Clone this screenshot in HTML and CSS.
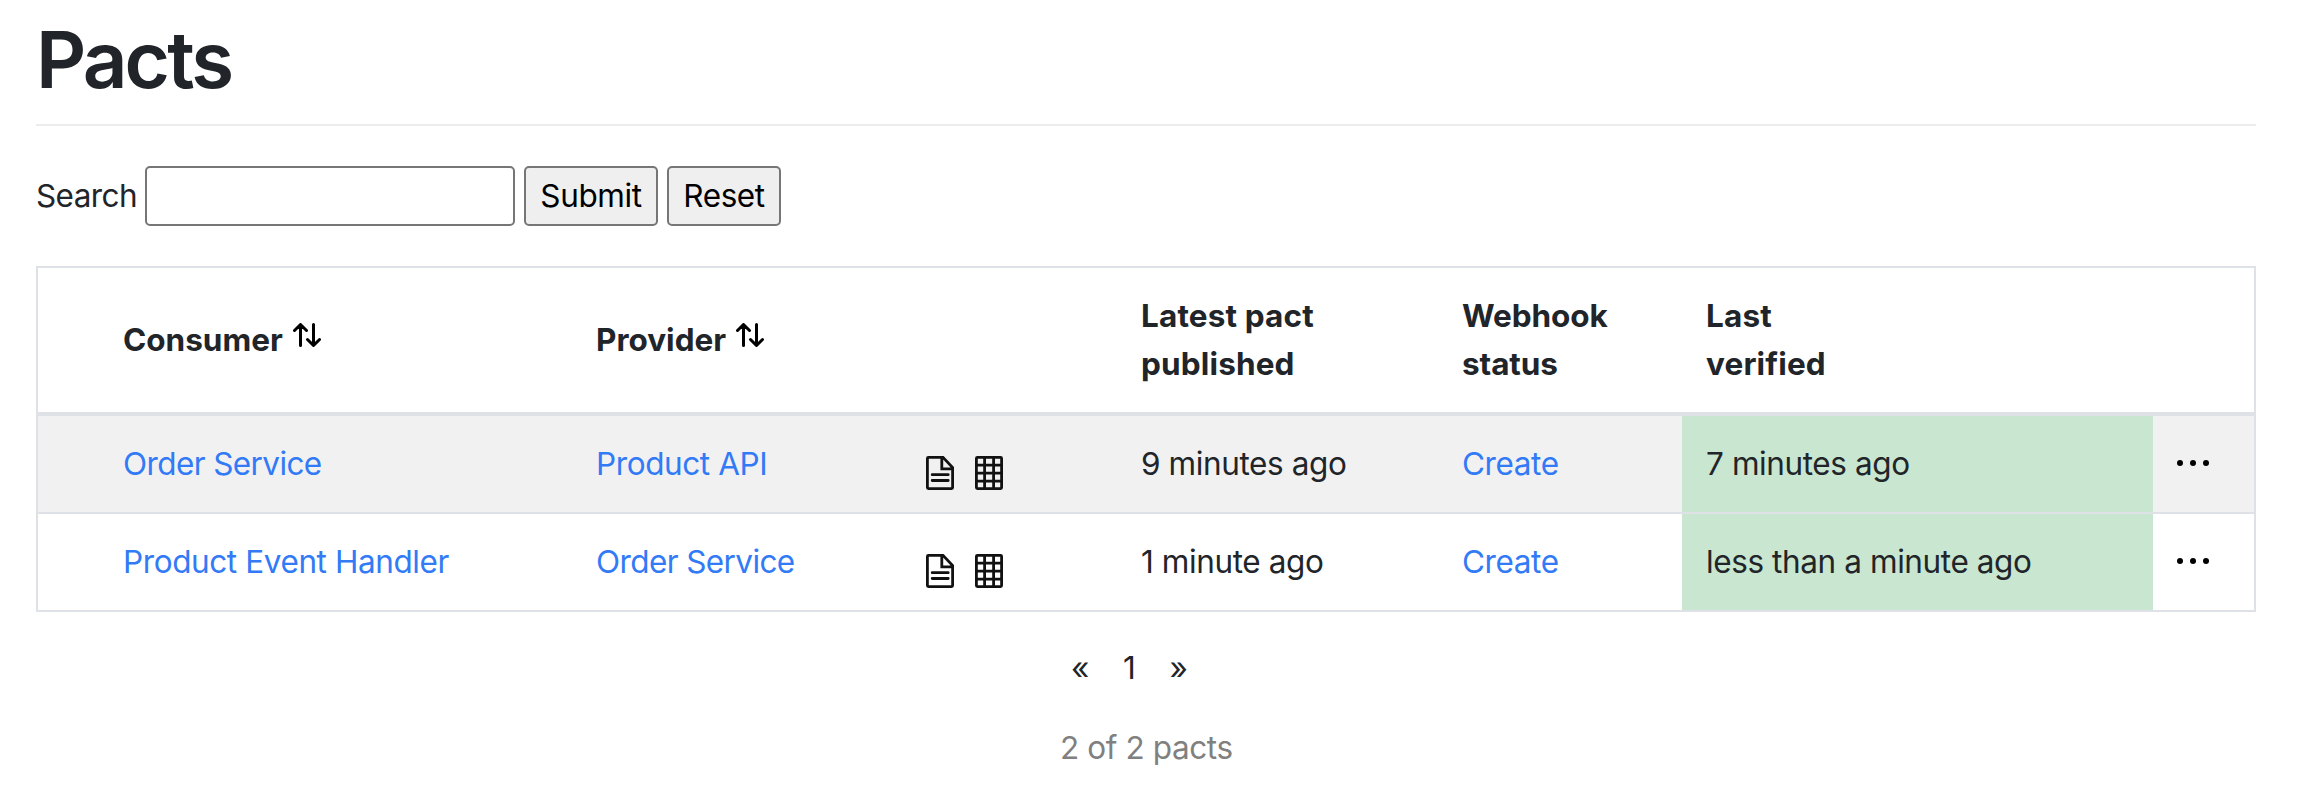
FILE: index.html
```html
<!DOCTYPE html>
<html lang="en">
<head>
<meta charset="utf-8">
<title>Pacts</title>
<link rel="stylesheet" href="styles.css">
</head>
<body>
<svg class="defs" width="0" height="0">
  <symbol id="sort" viewBox="0 0 28 24"><path d="M7.5 22.5V2M1.5 7.5l6-6 6 6M20.5 1.5V22M14.5 16.5l6 6 6-6"/></symbol>
  <symbol id="doc" viewBox="0 0 28 34"><path d="M1.4 2.4Q1.4 1.4 2.4 1.4H17L26.6 11.5V31.6Q26.6 32.6 25.6 32.6H2.4Q1.4 32.6 1.4 31.6ZM15.8 1.4V12.8H26.6M6.2 18.7H22.2M6.2 24.5H22.2"/></symbol>
  <symbol id="grid" viewBox="0 0 28 34"><path d="M2.4 1.4H25.6Q26.6 1.4 26.6 2.4V31.6Q26.6 32.6 25.6 32.6H2.4Q1.4 32.6 1.4 31.6V2.4Q1.4 1.4 2.4 1.4ZM9.6 1.4V32.6M18.6 1.4V32.6M1.4 9.2H26.6M1.4 17.2H26.6M1.4 25.2H26.6"/></symbol>
  <symbol id="dots" viewBox="0 0 34 6"><circle cx="4" cy="3" r="3"/><circle cx="17" cy="3" r="3"/><circle cx="30" cy="3" r="3"/></symbol>
</svg>
<main class="page">
  <h1 class="title">Pacts</h1>
  <form class="search">
    <label class="search-label" for="q">Search</label>
    <input class="search-input" id="q" type="text">
    <button class="btn btn-submit" type="button">Submit</button>
    <button class="btn btn-reset" type="button">Reset</button>
  </form>
  <table class="pacts">
    <colgroup><col class="c-pad"><col class="c-consumer"><col class="c-provider"><col class="c-icons"><col class="c-published"><col class="c-webhook"><col class="c-verified"><col class="c-menu"></colgroup>
    <thead>
      <tr>
        <th></th>
        <th>Consumer<svg class="sort"><use href="#sort"/></svg></th>
        <th>Provider<svg class="sort"><use href="#sort"/></svg></th>
        <th></th>
        <th class="wide">Latest pact<br>published</th>
        <th class="webhook">Webhook<br>status</th>
        <th class="verified wide">Last<br>verified</th>
        <th></th>
      </tr>
    </thead>
    <tbody>
      <tr class="odd">
        <td></td>
        <td><a class="link service">Order Service</a></td>
        <td><a class="link">Product API</a></td>
        <td><div class="icons"><svg class="icon"><use href="#doc"/></svg><svg class="icon"><use href="#grid"/></svg></div></td>
        <td>9 minutes ago</td>
        <td><a class="link">Create</a></td>
        <td class="verified success">7 minutes ago</td>
        <td><svg class="dots"><use href="#dots"/></svg></td>
      </tr>
      <tr>
        <td></td>
        <td><a class="link">Product Event Handler</a></td>
        <td><a class="link service">Order Service</a></td>
        <td><div class="icons"><svg class="icon"><use href="#doc"/></svg><svg class="icon"><use href="#grid"/></svg></div></td>
        <td>1 minute ago</td>
        <td><a class="link">Create</a></td>
        <td class="verified success">less than a minute ago</td>
        <td><svg class="dots"><use href="#dots"/></svg></td>
      </tr>
    </tbody>
  </table>
  <nav class="pager"><span class="arrow">«</span><span class="num">1</span><span class="arrow">»</span></nav>
  <p class="count">2 of 2 pacts</p>
</main>
</body>
</html>
```
FILE: styles.css
```css
* { box-sizing: border-box; }
body {
  margin: 0;
  background: #fff;
  color: #212529;
  font-family: Inter, "Liberation Sans", sans-serif;
  font-size: 31.5px;
  line-height: 48px;
  letter-spacing: -0.4px;
}
.defs { position: absolute; }
.page { padding: 0 44px 0 36px; }
.title {
  margin: 0;
  height: 126px;
  padding-top: 12px;
  border-bottom: 2px solid #ececed;
  font-size: 78px;
  font-weight: 560;
  line-height: 96px;
  letter-spacing: -2.9px;
}
.search {
  display: flex;
  align-items: center;
  height: 60px;
  margin: 40px 0;
}
.search-label { width: 109px; letter-spacing: -0.6px; }
.search-input {
  width: 370px;
  height: 60px;
  margin-right: 9px;
  border: 2px solid #767676;
  border-radius: 5px;
  background: #fff;
}
.btn {
  height: 60px;
  padding: 0;
  border: 2px solid #767676;
  border-radius: 5px;
  background: #efefef;
  color: #000;
  font: inherit;
  letter-spacing: inherit;
}
.btn-submit { width: 134px; margin-right: 9px; }
.btn-reset { width: 114px; }
.pacts {
  width: 2220px;
  table-layout: fixed;
  border: 2px solid #dee2e6;
  border-spacing: 0;
}
.c-pad { width: 62px; }
.c-consumer { width: 473px; }
.c-provider { width: 329px; }
.c-icons { width: 216px; }
.c-published { width: 321px; }
.c-webhook { width: 243px; }
.c-verified { width: 471px; }
.c-menu { width: 101px; }
.pacts th, .pacts td { padding: 0 23px; text-align: left; white-space: nowrap; }
.pacts .verified { padding-left: 24px; }
.pacts th {
  height: 148px;
  border-bottom: 4px solid #dee2e6;
  font-weight: 700;
  letter-spacing: 0;
}
.pacts .wide { letter-spacing: 0.15px; }
.pacts .webhook { letter-spacing: -0.1px; }
.pacts td { height: 96px; }
.pacts tr + tr td { height: 98px; border-top: 2px solid #dee2e6; }
.odd { background: #f1f1f1; }
.pacts .success { background: #c9e6d0; }
.link { color: #327af6; }
.service { letter-spacing: -0.6px; }
.sort { width: 28px; height: 24px; margin-left: 10px; fill: none; stroke: #000; stroke-width: 3; stroke-linecap: round; stroke-linejoin: round; vertical-align: 4px; }
.icons { display: flex; gap: 21px; padding: 17px 0 0 1px; }
.icon { width: 28px; height: 34px; fill: none; stroke: #111; stroke-width: 2.8; stroke-linecap: round; }
.dots { display: block; width: 34px; height: 6px; margin-top: -2px; }
.pager {
  display: flex;
  gap: 34px;
  margin: 32px 0 32px 1035px;
  line-height: 48px;
}
.count { margin: 0; padding-left: 1024px; color: #808080; }
```
